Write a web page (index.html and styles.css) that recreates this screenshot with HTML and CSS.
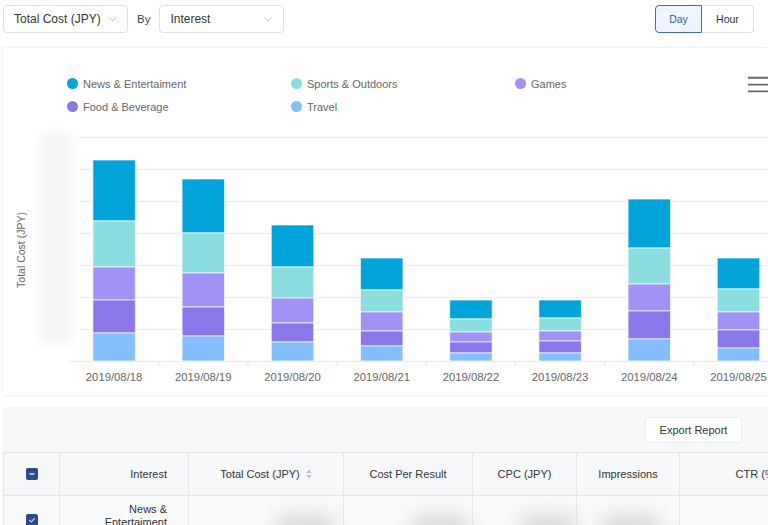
FILE: index.html
```html
<!DOCTYPE html>
<html lang="en">
<head>
<meta charset="utf-8">
<title>Report</title>
<link rel="stylesheet" href="styles.css">
</head>
<body>
<div class="toolbar">
  <div class="select s1"><span>Total Cost (JPY)</span><svg class="chev" width="8" height="5" viewBox="0 0 8 5"><path d="M0.5 0.5 L4 4 L7.5 0.5" fill="none" stroke="#c4c7cc" stroke-width="1"/></svg></div>
  <span class="by">By</span>
  <div class="select s2"><span>Interest</span><svg class="chev" width="8" height="5" viewBox="0 0 8 5"><path d="M0.5 0.5 L4 4 L7.5 0.5" fill="none" stroke="#c4c7cc" stroke-width="1"/></svg></div>
  <div class="toggle"><button class="tg on">Day</button><button class="tg">Hour</button></div>
</div>

<section class="chart-card">
  <div class="legend-row">
    <ul class="legend">
      <li><i class="dot c-news"></i>News &amp; Entertaiment</li>
      <li><i class="dot c-sports"></i>Sports &amp; Outdoors</li>
      <li><i class="dot c-games"></i>Games</li>
      <li><i class="dot c-food"></i>Food &amp; Beverage</li>
      <li><i class="dot c-travel"></i>Travel</li>
    </ul>
    <svg class="menu" width="22" height="18" viewBox="0 0 22 18"><path d="M0 1H22M0 8.5H22M0 16H22" stroke="#6b6b6b" stroke-width="2"/></svg>
  </div>
  <svg class="plot" width="800" height="270" viewBox="2 125 800 270">
    <defs><filter id="bl" x="-60%" y="-20%" width="220%" height="140%"><feGaussianBlur stdDeviation="6"/></filter></defs>
    <rect x="38" y="132" width="34" height="212" fill="#f4f4f4" filter="url(#bl)"/>
    <text class="ylab" x="24" y="250" transform="rotate(-90 24 250)">Total Cost (JPY)</text>
    <g stroke="#eeeeee" stroke-width="1.5">
      <line x1="78" x2="800" y1="137.5" y2="137.5"/>
      <line x1="78" x2="800" y1="169.5" y2="169.5"/>
      <line x1="78" x2="800" y1="201.5" y2="201.5"/>
      <line x1="78" x2="800" y1="233.5" y2="233.5"/>
      <line x1="78" x2="800" y1="265.5" y2="265.5"/>
      <line x1="78" x2="800" y1="297.5" y2="297.5"/>
      <line x1="78" x2="800" y1="329.5" y2="329.5"/>
    </g>
    <g stroke="#e3e9f2" stroke-width="1">
      <line x1="68.5" x2="800" y1="361.5" y2="361.5"/>
      <line x1="157.7" x2="157.7" y1="361.5" y2="367"/>
      <line x1="246.9" x2="246.9" y1="361.5" y2="367"/>
      <line x1="336.1" x2="336.1" y1="361.5" y2="367"/>
      <line x1="425.3" x2="425.3" y1="361.5" y2="367"/>
      <line x1="514.5" x2="514.5" y1="361.5" y2="367"/>
      <line x1="603.7" x2="603.7" y1="361.5" y2="367"/>
      <line x1="692.9" x2="692.9" y1="361.5" y2="367"/>
      <line x1="782.1" x2="782.1" y1="361.5" y2="367"/>
    </g>
    <g class="bars" stroke="#ffffff" stroke-opacity="0.7" stroke-width="1">
      <g transform="translate(91.85 0)">
        <rect class="f-news" width="42.5" y="160" height="61"/><rect class="f-sports" width="42.5" y="221" height="46"/><rect class="f-games" width="42.5" y="267" height="33"/><rect class="f-food" width="42.5" y="300" height="33"/><rect class="f-travel" width="42.5" y="333" height="28"/>
      </g>
      <g transform="translate(181.05 0)">
        <rect class="f-news" width="42.5" y="179" height="54"/><rect class="f-sports" width="42.5" y="233" height="40"/><rect class="f-games" width="42.5" y="273" height="34"/><rect class="f-food" width="42.5" y="307" height="29"/><rect class="f-travel" width="42.5" y="336" height="25"/>
      </g>
      <g transform="translate(270.25 0)">
        <rect class="f-news" width="42.5" y="225" height="42"/><rect class="f-sports" width="42.5" y="267" height="31"/><rect class="f-games" width="42.5" y="298" height="25"/><rect class="f-food" width="42.5" y="323" height="19"/><rect class="f-travel" width="42.5" y="342" height="19"/>
      </g>
      <g transform="translate(359.45 0)">
        <rect class="f-news" width="42.5" y="258" height="32"/><rect class="f-sports" width="42.5" y="290" height="22"/><rect class="f-games" width="42.5" y="312" height="19"/><rect class="f-food" width="42.5" y="331" height="15"/><rect class="f-travel" width="42.5" y="346" height="15"/>
      </g>
      <g transform="translate(448.65 0)">
        <rect class="f-news" width="42.5" y="300" height="19"/><rect class="f-sports" width="42.5" y="319" height="13"/><rect class="f-games" width="42.5" y="332" height="10"/><rect class="f-food" width="42.5" y="342" height="11"/><rect class="f-travel" width="42.5" y="353" height="8"/>
      </g>
      <g transform="translate(537.85 0)">
        <rect class="f-news" width="42.5" y="300" height="18"/><rect class="f-sports" width="42.5" y="318" height="13"/><rect class="f-games" width="42.5" y="331" height="10"/><rect class="f-food" width="42.5" y="341" height="12"/><rect class="f-travel" width="42.5" y="353" height="8"/>
      </g>
      <g transform="translate(627.05 0)">
        <rect class="f-news" width="42.5" y="199" height="49"/><rect class="f-sports" width="42.5" y="248" height="36"/><rect class="f-games" width="42.5" y="284" height="27"/><rect class="f-food" width="42.5" y="311" height="28"/><rect class="f-travel" width="42.5" y="339" height="22"/>
      </g>
      <g transform="translate(716.25 0)">
        <rect class="f-news" width="42.5" y="258" height="31"/><rect class="f-sports" width="42.5" y="289" height="23"/><rect class="f-games" width="42.5" y="312" height="18"/><rect class="f-food" width="42.5" y="330" height="18"/><rect class="f-travel" width="42.5" y="348" height="13"/>
      </g>
    </g>
    <g class="xlab">
      <text x="113.1" y="381">2019/08/18</text>
      <text x="202.3" y="381">2019/08/19</text>
      <text x="291.5" y="381">2019/08/20</text>
      <text x="380.7" y="381">2019/08/21</text>
      <text x="469.9" y="381">2019/08/22</text>
      <text x="559.1" y="381">2019/08/23</text>
      <text x="648.3" y="381">2019/08/24</text>
      <text x="737.5" y="381">2019/08/25</text>
    </g>
  </svg>
</section>

<section class="table-card">
  <div class="actions"><button class="export">Export Report</button></div>
  <div class="table-wrap">
    <table class="grid">
      <colgroup>
        <col class="w-cb"><col class="w-int"><col class="w-cost"><col class="w-cpr"><col class="w-cpc"><col class="w-imp"><col class="w-ctr">
      </colgroup>
      <thead>
        <tr>
          <th class="cbcell"><span class="cb"><svg width="12" height="12" viewBox="0 0 12 12"><path d="M3.5 6H8.5" stroke="#fff" stroke-width="1.2"/></svg></span></th>
          <th class="right">Interest</th>
          <th>Total Cost (JPY)<svg class="sort" width="6" height="10" viewBox="0 0 6 10"><path d="M0 4L3 0.5L6 4Z M0 6L3 9.5L6 6Z" fill="#c0c4cc"/></svg></th>
          <th>Cost Per Result</th>
          <th>CPC (JPY)</th>
          <th>Impressions</th>
          <th>CTR (%)</th>
        </tr>
      </thead>
      <tbody>
        <tr>
          <td class="cbcell"><span class="cb"><svg width="12" height="12" viewBox="0 0 12 12"><path d="M3.2 6.2L5.2 8L8.8 4.2" fill="none" stroke="#c9d3ea" stroke-width="1.1"/></svg></span></td>
          <td class="right name">News &amp; Entertaiment</td>
          <td class="val v1"><span class="blob"></span></td>
          <td class="val v2"><span class="blob"></span></td>
          <td class="val v3"><span class="blob"></span></td>
          <td class="val v4"><span class="blob"></span></td>
          <td class="val"></td>
        </tr>
      </tbody>
    </table>
  </div>
</section>
</body>
</html>
```
FILE: styles.css
```css
html, body {
  margin: 0;
  padding: 0;
  height: 100%;
  overflow: hidden;
  background: #ffffff;
  font-family: "Liberation Sans", Arial, sans-serif;
  color: #333;
}

.toolbar {
  display: flex;
  align-items: center;
  height: 28px;
  padding: 5px 14px 0 3px;
}

.select {
  box-sizing: border-box;
  height: 28px;
  width: 125px;
  border: 1px solid #dfe1e6;
  border-radius: 4px;
  display: flex;
  align-items: center;
  justify-content: space-between;
  padding: 0 10px;
  font-size: 12px;
  color: #333;
}

.s2 { padding-right: 11px; }

.chev { display: block; }

.by {
  margin: 0 9px;
  font-size: 11.5px;
  color: #444;
}

.toggle {
  margin-left: auto;
  display: flex;
}

.tg {
  box-sizing: border-box;
  height: 28px;
  margin: 0;
  font-family: inherit;
  font-size: 10.5px;
  background: #fff;
  color: #333;
  border: 1px solid #dfe1e6;
  border-left: none;
  border-radius: 0 4px 4px 0;
  width: 52px;
  padding: 0;
}

.tg.on {
  width: 47px;
  background: #eef5fe;
  color: #3b5998;
  border: 1px solid #4467ad;
  border-radius: 4px 0 0 4px;
}

.chart-card {
  margin: 14px 0 0 2px;
  box-sizing: border-box;
  border: 1px solid #f4f4f4;
  border-right: none;
  box-shadow: 0 0 4px rgba(0, 0, 0, 0.03);
  padding-top: 24px;
  background: #fff;
  overflow: hidden;
}

.legend-row {
  display: flex;
  align-items: flex-start;
  padding-left: 64px;
}

.legend {
  list-style: none;
  margin: 0;
  padding: 0;
  display: grid;
  grid-template-columns: repeat(3, 224px);
  grid-auto-rows: 23px;
}

.legend li {
  display: flex;
  align-items: center;
  font-size: 11px;
  color: #666;
}

.dot {
  width: 11px;
  height: 11px;
  border-radius: 50%;
  margin-right: 5px;
}

.c-news { background: #00a3da; }
.c-sports { background: #8adee0; }
.c-games { background: #a193f6; }
.c-food { background: #8a78ea; }
.c-travel { background: #84befd; }

.menu {
  display: block;
  margin: 4px 0 0 9px;
}

.plot {
  display: block;
  margin-top: 7px;
}

.f-news { fill: #00a3da; }
.f-sports { fill: #8adee0; }
.f-games { fill: #a193f6; }
.f-food { fill: #8a78ea; }
.f-travel { fill: #84befd; }

.ylab {
  font-family: "Liberation Sans", Arial, sans-serif;
  font-size: 10.5px;
  fill: #666;
  text-anchor: middle;
}

.xlab text {
  font-family: "Liberation Sans", Arial, sans-serif;
  font-size: 11.3px;
  fill: #666;
  text-anchor: middle;
}

.table-card {
  margin: 11px 0 0 2px;
  background: #f7f8fa;
  height: 200px;
}

.actions {
  display: flex;
  justify-content: flex-end;
  padding: 10px 26px 0 0;
}

.export {
  box-sizing: border-box;
  height: 26px;
  width: 97px;
  padding: 0;
  margin: 0;
  font-family: inherit;
  font-size: 11px;
  color: #333;
  background: #fff;
  border: 1px solid #eceef1;
  border-radius: 3px;
}

.table-wrap {
  margin: 9px 0 0 1px;
  overflow: hidden;
}

.grid {
  border-collapse: collapse;
  table-layout: fixed;
  width: 831px;
}

.w-cb { width: 56px; }
.w-int { width: 129px; }
.w-cost { width: 155px; }
.w-cpr { width: 129px; }
.w-cpc { width: 104px; }
.w-imp { width: 103px; }
.w-ctr { width: 155px; }

.grid th, .grid td {
  border: 1px solid #e5e7eb;
  font-size: 11px;
  font-weight: normal;
  color: #333;
  text-align: center;
  padding: 0;
}

.grid th {
  height: 42px;
  background: #f7f8fa;
}

.grid td {
  height: 40px;
  background: #f8f9fb;
}

.grid .right {
  text-align: right;
  padding-right: 21px;
}

.grid .name {
  padding-left: 30px;
  line-height: 12.5px;
  vertical-align: top;
  padding-top: 7px;
}

.cbcell { line-height: 0; }

.cb {
  display: inline-block;
  width: 12px;
  height: 12px;
  border-radius: 2px;
  background: #2d4b8c;
}

.cb svg { display: block; }

.sort {
  margin-left: 6px;
  vertical-align: -1px;
}

.grid .val { text-align: right; }

.blob {
  display: inline-block;
  width: 56px;
  height: 22px;
  border-radius: 11px;
  background: #d6d6d6;
  filter: blur(9px);
  vertical-align: middle;
  margin-top: 14px;
}

.grid .v1 { padding-right: 10px; }
.grid .v2 { padding-right: 4px; }
.grid .v3 { padding-right: 0; }
.grid .v4 { padding-right: 20px; }
```
